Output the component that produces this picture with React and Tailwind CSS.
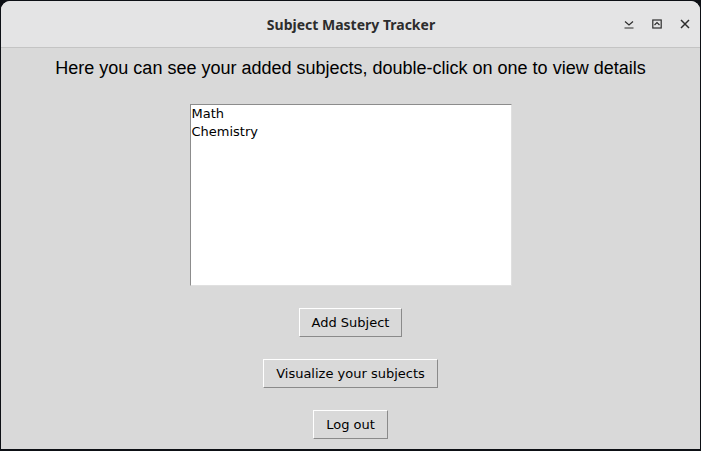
import React from 'react';

const subjects = ['Math', 'Chemistry'];

const TkButton = ({ children }) => (
  <button className="h-[29px] px-[12px] bg-[#d9d9d9] text-[13px] text-black border border-t-white border-l-white border-b-[#8a8a8a] border-r-[#8a8a8a] leading-none">
    {children}
  </button>
);

const App = () => {
  return (
    <div className="w-[701px] h-[451px] bg-[#0d1015] pt-px pl-px overflow-hidden">
      <div className="w-[699px] h-[448px] flex flex-col bg-[#d9d9d9] rounded-t-[9px] overflow-hidden">
        {/* Title bar */}
        <div className="h-[47px] shrink-0 bg-[#e4e4e5] border-b border-[#c4c4c4] flex items-center relative">
          <div
            className="flex-1 text-center text-[14px] font-bold text-[#2d2d2d] pl-px"
            style={{ fontFamily: '"Noto Sans", "DejaVu Sans", sans-serif' }}
          >
            Subject Mastery Tracker
          </div>
          <div className="absolute right-[10px] top-0 h-full flex items-center gap-[18px] text-[#2d2d2d]">
            <svg width="10" height="10" viewBox="0 0 10 10" fill="none" stroke="currentColor" strokeWidth="1.2">
              <path d="M1 2.5 L5 6 L9 2.5" />
              <path d="M0.5 9 H9.5" />
            </svg>
            <svg width="10" height="10" viewBox="0 0 10 10" fill="none" stroke="currentColor" strokeWidth="1.2">
              <rect x="0.8" y="1" width="8.4" height="8" />
              <path d="M2.5 6 L5 3.5 L7.5 6" />
            </svg>
            <svg width="10" height="10" viewBox="0 0 10 10" fill="none" stroke="currentColor" strokeWidth="1.5">
              <path d="M1 1 L9 9 M9 1 L1 9" />
            </svg>
          </div>
        </div>

        {/* Content */}
        <div className="flex flex-col items-center" style={{ fontFamily: '"DejaVu Sans", sans-serif' }}>
          <p
            className="mt-[9px] text-[18px] leading-[22px] text-black"
            style={{ fontFamily: '"Liberation Sans", Arial, sans-serif' }}
          >
            Here you can see your added subjects, double-click on one to view details
          </p>

          <div className="mt-[25px] w-[322px] h-[182px] bg-white border border-t-[#8c8c8c] border-l-[#8c8c8c] border-b-[#e0e0e0] border-r-[#e0e0e0] text-[13px] leading-[18px] text-black">
            {subjects.map(s => (
              <div key={s} className="px-px">{s}</div>
            ))}
          </div>

          <div className="mt-[22px]"><TkButton>Add Subject</TkButton></div>
          <div className="mt-[22px]"><TkButton>Visualize your subjects</TkButton></div>
          <div className="mt-[22px]"><TkButton>Log out</TkButton></div>
        </div>
      </div>
    </div>
  );
};

export default App;
